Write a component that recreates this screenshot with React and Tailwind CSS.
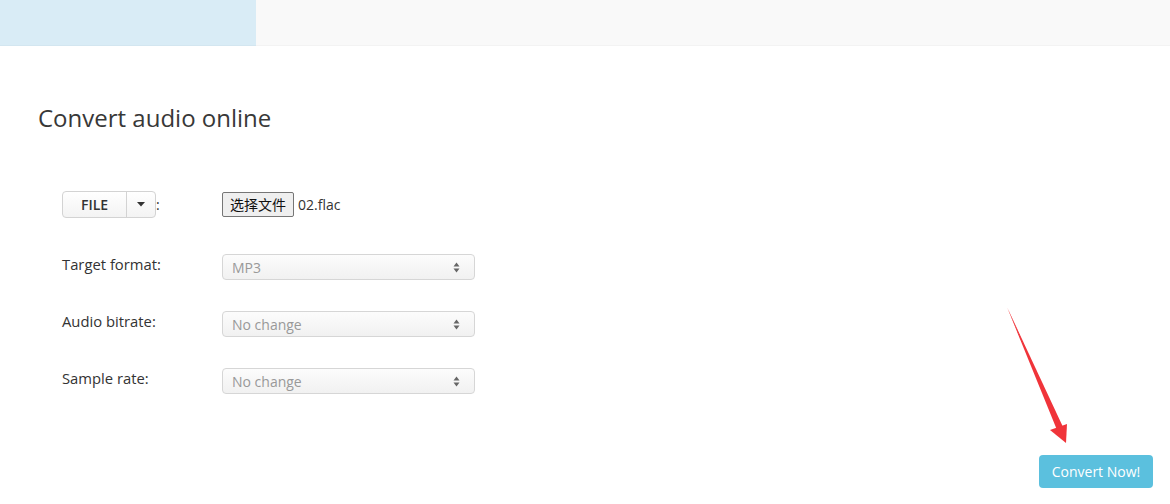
import { useState } from "react";

const font = { fontFamily: '"Open Sans", "Noto Sans CJK SC", sans-serif' };

function UpDown() {
  return (
    <svg width="7" height="11" viewBox="0 0 7 11" className="text-[#666]">
      <path d="M3.5 0.5 L6.5 4.5 L0.5 4.5 Z" fill="currentColor" />
      <path d="M3.5 10.5 L6.5 6.5 L0.5 6.5 Z" fill="currentColor" />
    </svg>
  );
}

function FakeSelect({ value }) {
  return (
    <div className="w-[253px] h-[26px] flex items-center justify-between pl-[9px] pr-[14px] border border-[#d6d6d6] rounded-[4px] bg-gradient-to-b from-[#fcfcfc] to-[#f1f1f1] text-[14px] text-[#999]">
      <span>{value}</span>
      <UpDown />
    </div>
  );
}

export default function App() {
  const [target] = useState("MP3");

  const rows = [
    { label: "Target format:", value: target, mt: "mt-[36px]" },
    { label: "Audio bitrate:", value: "No change", mt: "mt-[31px]" },
    { label: "Sample rate:", value: "No change", mt: "mt-[31px]" },
  ];

  return (
    <div className="relative w-[1170px] h-[504px] bg-white overflow-hidden" style={font}>
      {/* top strip */}
      <div className="flex h-[46px]">
        <div className="w-[256px] bg-[#d9ecf6] border-b border-[#d3e6f0]"></div>
        <div className="flex-1 bg-[#f9f9f9] border-b border-[#f3f3f3]"></div>
      </div>

      <h1 className="ml-[38px] mt-[56px] text-[24px] leading-[32px] text-[#383838]">Convert audio online</h1>

      <div className="ml-[62px] mt-[57px]">
        {/* file row */}
        <div className="flex items-center h-[27px]">
          <div className="w-[160px] flex items-center">
            <div className="flex h-[27px] border border-[#d3d3d3] rounded-[4px] bg-gradient-to-b from-white to-[#f3f3f3] text-[#333]">
              <div className="w-[64px] flex items-center justify-center text-[14px] font-semibold border-r border-[#d3d3d3]">
                FILE
              </div>
              <div className="w-[28px] flex items-center justify-center">
                <svg width="8" height="5" viewBox="0 0 8 5">
                  <path d="M0 0 L8 0 L4 4.5 Z" fill="#333" />
                </svg>
              </div>
            </div>
            <span className="text-[14px] text-[#333]">:</span>
          </div>
          <div className="flex items-center">
            <button className="h-[25px] w-[72px] border border-[#767676] rounded-[2px] bg-[#efefef] text-[14px] text-[#111] leading-none">
              选择文件
            </button>
            <span className="ml-[4px] text-[14px] text-[#333]">02.flac</span>
          </div>
        </div>

        {rows.map((r) => (
          <div key={r.label} className={`flex items-start ${r.mt}`}>
            <label className="w-[160px] text-[14.8px] leading-[20px] text-[#333]">{r.label}</label>
            <FakeSelect value={r.value} />
          </div>
        ))}
      </div>

      <div className="flex justify-end pr-[17px] mt-[61px]">
        <button className="w-[114px] h-[33px] rounded-[4px] bg-[#5bc0de] text-white text-[14px]">Convert Now!</button>
      </div>

      {/* red annotation arrow */}
      <svg className="absolute left-0 top-0 pointer-events-none" width="1170" height="504">
        <path d="M1007 307 L1061 428 L1057 430 Z" fill="#f0343a" />
        <path d="M1007 307 L1063 427 L1059 429 Z" fill="#f0343a" />
        <path d="M1050 430 L1066 443 L1067 424 Z" fill="#f0343a" />
      </svg>
    </div>
  );
}
